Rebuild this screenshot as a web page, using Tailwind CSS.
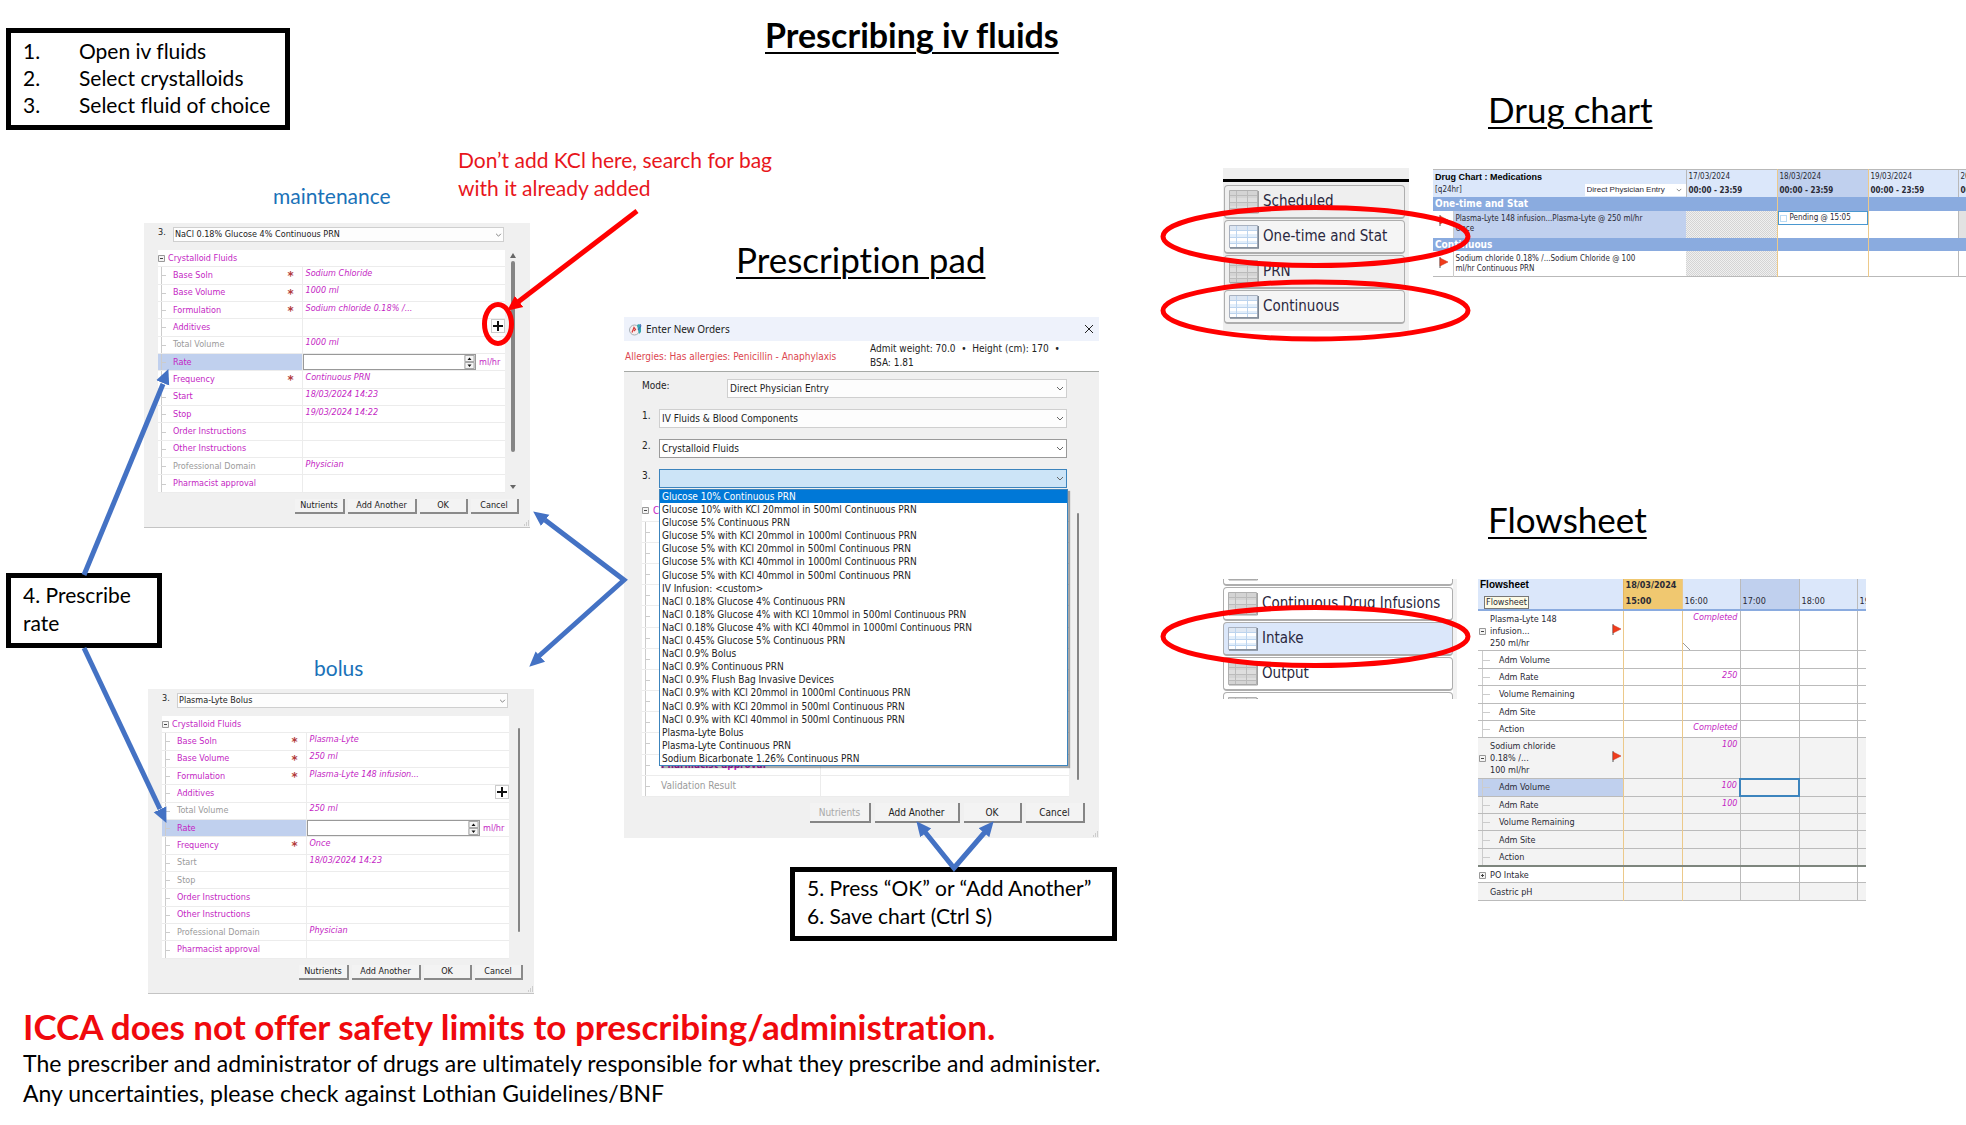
<!DOCTYPE html>
<html lang="en">
<head>
<meta charset="utf-8">
<meta name="viewport" content="width=device-width, initial-scale=1">
<title>Prescribing iv fluids</title>
<script src="https://cdn.jsdelivr.net/npm/@tailwindcss/browser@4"></script>
</head>
<body class="overflow-x-hidden bg-white font-['Lato',sans-serif] text-black [font-variant-ligatures:none]">
<svg class="hidden" aria-hidden="true">
  <defs>
    <symbol id="chev" viewBox="0 0 8 5"><path d="M1 1l3 3 3-3" fill="none" stroke="#666" stroke-width="1"/></symbol>
    <symbol id="flag" viewBox="0 0 10 11"><path d="M1 0v11" stroke="#555" stroke-width="1"/><path d="M1 1l8 4-8 4z" fill="#f03c1c" stroke="#c62a10" stroke-width=".5"/></symbol>
    <symbol id="minus" viewBox="0 0 7 7"><path d="M.5.5h6v6h-6z" fill="#f4f4f4" stroke="#999"/><path d="M2 3.5h3" stroke="#444"/></symbol>
    <symbol id="plusbox" viewBox="0 0 7 7"><path d="M.5.5h6v6h-6z" fill="#f4f4f4" stroke="#999"/><path d="M2 3.5h3M3.5 2v3" stroke="#444"/></symbol>
    <symbol id="grip" viewBox="0 0 7 7"><path d="M5 1h1M5 3h1M3 3h1M5 5h1M3 5h1M1 5h1" stroke="#aaa"/></symbol>
    <symbol id="sheet" viewBox="0 0 30 24"><path d="M.5.5h28v22H.5z" fill="#fff" stroke="#a9b1bf"/><path d="M1 1h27v4H1z" fill="#dde6f2"/><path d="M1 9h27v3H1zM1 16h27v3H1z" fill="#e3effb"/><path d="M7.500 1v21M18.500 1v21M1 5.500h27M1 12.500h27M1 18.500h27" stroke="#bcd4ee" fill="none"/><path d="M1 23h28.500V1" fill="none" stroke="#7c8794" stroke-width="1.500"/></symbol>
    <symbol id="sheetgrey" viewBox="0 0 30 24"><path d="M.5.5h28v22H.5z" fill="#d4d4d4" stroke="#b0b0b0"/><path d="M1 8h27v4H1zM1 16h27v3H1z" fill="#dedede"/><path d="M7.500 1v21M18.500 1v21M1 5.500h27M1 12.500h27M1 18.500h27" stroke="#bbb" fill="none"/><path d="M1 23h28.500V1" fill="none" stroke="#a2a2a2"/></symbol>
  </defs>
</svg>

<main class="relative grid grid-cols-[624px_538px_1fr]">
  <!-- Steps 1 to 4 -->
  <section class="flex flex-col items-start">
    <ol class="mt-7 ml-1.5 w-[284px] border-[5px] border-black px-3 pt-1 pb-[7px] text-[21px] leading-[27px]">
      <li class="flex"><span class="w-14">1.</span>Open iv fluids</li>
      <li class="flex"><span class="w-14">2.</span>Select crystalloids</li>
      <li class="flex"><span class="w-14">3.</span>Select fluid of choice</li>
    </ol>
    <h3 class="mt-[52px] ml-[273px] text-[21px] leading-7 text-[#1a72b8]">maintenance</h3>
    <div data-panel="0" class="mt-[13px] ml-36"></div>
    <p class="mt-[45px] ml-1.5 w-[156px] border-[5px] border-black px-3 pt-[3px] pb-1.5 text-[21px] leading-7">4. Prescribe rate</p>
    <h3 class="mt-1.5 ml-[314px] text-[21px] leading-7 text-[#1a72b8]">bolus</h3>
    <div data-panel="1" class="mt-[7px] ml-[148px]"></div>
  </section>

  <!-- Prescription pad -->
  <section class="flex flex-col items-start">
    <h1 class="mt-[13px] ml-[141px] text-[34px] leading-[44px] font-bold whitespace-nowrap underline decoration-2 underline-offset-4">Prescribing iv fluids</h1>
    <h2 class="mt-[180px] ml-28 text-[35px] leading-[44px] whitespace-nowrap underline decoration-2 underline-offset-4">Prescription pad</h2>
    <div role="dialog" aria-label="Enter New Orders" class="mt-9 w-[475px] bg-[#f0f0f0] font-['DejaVu_Sans_Condensed','DejaVu_Sans',sans-serif] text-[10px] leading-[13px] text-[#222]">
      <div class="flex h-6 items-center bg-[#eef2fb] px-[5px] font-['Noto_Sans',sans-serif]">
        <svg class="mr-1 size-[13px]" viewBox="0 0 13 13"><circle cx="5.500" cy="7" r="5" fill="#f8eeee" stroke="#a5afb6"/><path d="M3 9.500L5 4.500l1.500 2L5 8" fill="none" stroke="#d43c3c" stroke-width="1.200"/><path d="M8 2l2-1 2 2v6l-2 2-1-4z" fill="#35a6b0"/><path d="M11 1l1 2-3 4" stroke="#3c62b8" fill="none"/></svg>
        <span class="flex-1">Enter New Orders</span>
        <button aria-label="Close"><svg class="size-[10px]" viewBox="0 0 10 10"><path d="M1 1l8 8M9 1l-8 8" stroke="#222" stroke-width="1"/></svg></button>
      </div>
      <div class="flex h-[31px] items-center border-b border-[#a6a9a6] bg-white pl-px">
        <p class="w-[245px] whitespace-nowrap text-[#dc4650]">Allergies: Has allergies: Penicillin - Anaphylaxis</p>
        <p class="leading-[14px] whitespace-nowrap">Admit weight: 70.0 &nbsp;•&nbsp; Height (cm): 170 &nbsp;•<br>BSA: 1.81</p>
      </div>
      <div class="flex flex-col gap-[11px] pt-[7px] pr-8 pl-[18px]">
        <div class="flex items-start"><label for="mode" class="w-[85px]">Mode:</label>
          <span class="relative flex-1"><select id="mode" class="block h-[19px] w-full appearance-none border border-[#cfcfcf] bg-[#fdfdfd] pl-0.5"><option>Direct Physician Entry</option></select><svg class="pointer-events-none absolute top-[7px] right-[3px] h-[5px] w-2"><use href="#chev"/></svg></span></div>
        <div class="flex items-start"><label for="s1" class="w-[17px]">1.</label>
          <span class="relative flex-1"><select id="s1" class="block h-[19px] w-full appearance-none border border-[#cfcfcf] bg-[#fdfdfd] pl-0.5"><option>IV Fluids &amp; Blood Components</option></select><svg class="pointer-events-none absolute top-[7px] right-[3px] h-[5px] w-2"><use href="#chev"/></svg></span></div>
        <div class="flex items-start"><label for="s2" class="w-[17px]">2.</label>
          <span class="relative flex-1"><select id="s2" class="block h-[19px] w-full appearance-none border border-[#9a9a9a] bg-white pl-0.5"><option>Crystalloid Fluids</option></select><svg class="pointer-events-none absolute top-[7px] right-[3px] h-[5px] w-2"><use href="#chev"/></svg></span></div>
        <div class="flex items-start"><label for="s3" class="w-[17px]">3.</label>
          <div class="relative flex-1"><select id="s3" class="block h-[19px] w-full appearance-none border border-[#3c84bd] bg-[#cce4f7] pl-0.5"><option></option></select><svg class="pointer-events-none absolute top-[7px] right-[3px] h-[5px] w-2"><use href="#chev"/></svg>
            <ul id="fluids" role="listbox" aria-label="Fluids" class="absolute top-5 left-0 z-10 grid h-[277px] w-[409px] auto-rows-fr border border-[#3c84bd] bg-white whitespace-nowrap shadow-[2px_2px_1px_#0005]"></ul>
          </div></div>
      </div>
      <div class="mt-3 flex pl-[18px]">
        <table id="padtable" class="h-[297px] w-[427px] table-fixed bg-white"></table>
        <div class="mt-[13px] ml-2 h-[267px] w-0.5 rounded bg-[#858585]"></div>
      </div>
      <div class="flex justify-end gap-1 pt-1.5 pr-[14px]">
        <button disabled class="h-5 w-[61px] border-r-2 border-b-2 border-[#858585] bg-[#f3f3f3] text-[#a8a8a8]">Nutrients</button>
        <button class="h-5 w-[85px] border-r-2 border-b-2 border-[#858585] bg-[#f3f3f3]">Add Another</button>
        <button class="h-5 w-[58px] border-r-2 border-b-2 border-[#858585] bg-[#f3f3f3]">OK</button>
        <button class="h-5 w-[59px] border-r-2 border-b-2 border-[#858585] bg-[#f3f3f3]">Cancel</button>
      </div>
      <svg class="mt-2 ml-auto size-[7px]"><use href="#grip"/></svg>
    </div>
    <div class="mt-[29px] ml-[166px] w-[327px] border-[5px] border-black px-3 pt-0.5 pb-1.5 text-[21px] leading-7"><p>5. Press “OK” or “Add Another”</p><p>6. Save chart (Ctrl S)</p></div>
  </section>

  <!-- Charts -->
  <section class="flex min-w-0 flex-col">
    <h2 class="mt-[87px] ml-[326px] text-[35px] leading-[44px] underline decoration-2 underline-offset-4">Drug chart</h2>
    <div class="mt-[37px] ml-[61px] flex items-start gap-6 font-['DejaVu_Sans_Condensed','DejaVu_Sans',sans-serif]">
      <nav class="flex h-[163px] w-[186px] shrink-0 flex-col gap-px bg-[#efefef] text-[15px] text-[#2a2840]">
        <div class="mb-0.5 h-[14px] border-b-[3px] border-black"></div>
        <button class="mx-px mr-1 flex h-[34px] items-center gap-1 rounded-[4px] border border-b-2 border-[#aeaeae] bg-[#efefef] pl-1"><svg class="h-6 w-[30px]"><use href="#sheetgrey"/></svg>Scheduled</button>
        <button class="mx-px mr-1 flex h-[34px] items-center gap-1 rounded-[4px] border border-b-2 border-[#aeaeae] bg-[#f5f5f5] pl-1"><svg class="h-6 w-[30px]"><use href="#sheet"/></svg>One-time and Stat</button>
        <button class="mx-px mr-1 flex h-[34px] items-center gap-1 rounded-[4px] border border-b-2 border-[#aeaeae] bg-[#efefef] pl-1"><svg class="h-6 w-[30px]"><use href="#sheetgrey"/></svg>PRN</button>
        <button class="mx-px mr-1 flex h-[34px] items-center gap-1 rounded-[4px] border border-b-2 border-[#aeaeae] bg-[#f5f5f5] pl-1"><svg class="h-6 w-[30px]"><use href="#sheet"/></svg>Continuous</button>
      </nav>
      <div class="mt-px min-w-0 flex-1 overflow-hidden">
        <table class="w-[616px] table-fixed border-y border-[#b9b9b9] text-left text-[8px] leading-[10px] text-[#2a2a35]">
          <colgroup><col class="w-5"><col class="w-[233px]"><col class="w-[91px]"><col class="w-[91px]"><col class="w-[90px]"><col class="w-[91px]"></colgroup>
          <thead><tr class="h-[27px] bg-[#dbe7fa] align-top">
            <th colspan="2" class="pl-0.5 font-normal"><div class="pt-0.5 font-['Liberation_Sans',sans-serif] text-[9px] font-bold text-black">Drug Chart : Medications</div>
              <div class="flex h-[15px] items-center justify-between"><span>[q24hr]</span><span class="relative"><select aria-label="Order mode" class="block h-[12px] w-[101px] appearance-none bg-white pl-0.5 font-['Liberation_Sans',sans-serif]"><option>Direct Physician Entry</option></select><svg class="pointer-events-none absolute top-1 right-1 h-1 w-1.5"><use href="#chev"/></svg></span></div></th>
            <th class="border-l border-[#b9b9b9] pt-0.5 pl-0.5 font-normal">17/03/2024<div class="pt-1 font-bold">00:00 - 23:59</div></th>
            <th class="border-x border-[#ecc98a] bg-[#c0d0ee] pt-0.5 pl-0.5 font-normal">18/03/2024<div class="pt-1 font-bold">00:00 - 23:59</div></th>
            <th class="pt-0.5 pl-0.5 font-normal">19/03/2024<div class="pt-1 font-bold">00:00 - 23:59</div></th>
            <th class="border-l border-[#b9b9b9] pt-0.5 pl-0.5 font-normal">20/03/2024<div class="pt-1 font-bold">00:00 - 23:59</div></th>
          </tr></thead>
          <tbody>
            <tr class="h-[14px] bg-[#8aabdf]"><th colspan="3" class="pl-0.5 text-[10px] font-bold text-white">One-time and Stat</th><td class="border-x border-[#ecc98a]"></td><td></td><td></td></tr>
            <tr class="h-[27px] align-top"><td class="border-r border-[#ccc] pt-1 pl-1.5"><svg class="h-[11px] w-2.5"><use href="#flag"/></svg></td><td class="bg-[#c0d0ee] pt-[3px] pl-0.5">Plasma-Lyte 148 infusion...Plasma-Lyte @ 250 ml/hr<br>Once</td>
              <td class="bg-[conic-gradient(#d4d4d4_25%,#f0f0f0_0_50%,#d4d4d4_0_75%,#f0f0f0_0)] bg-[length:2px_2px]"></td><td class="border-x border-[#ecc98a]"><label class="flex h-[14px] items-center gap-[3px] border border-[#4a98d0] px-px"><input type="checkbox" class="size-[7px] appearance-none border border-[#bcdcf4]">Pending @ 15:05</label></td><td></td><td class="border-l border-[#b9b9b9] bg-[conic-gradient(#d4d4d4_25%,#f0f0f0_0_50%,#d4d4d4_0_75%,#f0f0f0_0)] bg-[length:2px_2px]"></td></tr>
            <tr class="h-[13px] bg-[#8aabdf]"><th colspan="3" class="pl-0.5 text-[10px] font-bold text-white">Continuous</th><td class="border-x border-[#ecc98a]"></td><td></td><td></td></tr>
            <tr class="h-[25px] align-top"><td class="border-r border-[#ccc] pt-1.5 pl-1.5"><svg class="h-[11px] w-2.5"><use href="#flag"/></svg></td><td class="pt-[3px] pl-0.5">Sodium chloride 0.18% /...Sodium Chloride @ 100<br>ml/hr Continuous PRN</td>
              <td class="bg-[conic-gradient(#d4d4d4_25%,#f0f0f0_0_50%,#d4d4d4_0_75%,#f0f0f0_0)] bg-[length:2px_2px]"></td><td class="border-x border-[#ecc98a]"></td><td></td><td class="border-l border-[#b9b9b9]"></td></tr>
          </tbody>
        </table>
      </div>
    </div>
    <h2 class="mt-[166px] ml-[326px] text-[35px] leading-[44px] underline decoration-2 underline-offset-4">Flowsheet</h2>
    <div class="mt-[38px] ml-[61px] flex items-start gap-[21px] font-['DejaVu_Sans_Condensed','DejaVu_Sans',sans-serif]">
      <nav class="flex h-[120px] w-[234px] shrink-0 flex-col justify-center gap-px overflow-hidden border-r-4 border-[#f2f2f2] text-[15px] text-[#2a2840]">
        <button aria-label="Scheduled" class="flex h-[34px] shrink-0 items-center gap-1 rounded-[4px] border border-b-2 border-[#aeaeae] bg-white pl-1"><svg class="h-6 w-[30px]"><use href="#sheetgrey"/></svg></button>
        <button class="flex h-[34px] shrink-0 items-center gap-1 rounded-[4px] border border-b-2 border-[#aeaeae] bg-white pl-1 whitespace-nowrap"><svg class="h-6 w-[30px]"><use href="#sheetgrey"/></svg>Continuous Drug Infusions</button>
        <button class="flex h-[34px] shrink-0 items-center gap-1 rounded-[4px] border border-b-2 border-[#aeaeae] bg-[#dbe7fa] pl-1"><svg class="h-6 w-[30px]"><use href="#sheet"/></svg>Intake</button>
        <button class="flex h-[34px] shrink-0 items-center gap-1 rounded-[4px] border border-b-2 border-[#aeaeae] bg-white pl-1"><svg class="h-6 w-[30px]"><use href="#sheetgrey"/></svg>Output</button>
        <button aria-label="Balance" class="flex h-[34px] shrink-0 items-center gap-1 rounded-[4px] border border-b-2 border-[#aeaeae] bg-white pl-1"><svg class="h-6 w-[30px]"><use href="#sheetgrey"/></svg></button>
      </nav>
      <div class="w-[388px] overflow-hidden"><table id="flow" class="h-[322px] w-[438px] table-fixed text-left text-[9px] leading-3 text-[#2a2a35]"></table></div>
    </div>
  </section>

  <!-- Callouts and arrows drawn over the windows -->
  <p class="absolute top-[146px] left-[458px] text-[21px] leading-7 text-[#e8161c]">Don’t add KCl here, search for bag<br>with it already added</p>
  <svg class="pointer-events-none absolute inset-0 z-20 size-full overflow-visible" aria-hidden="true">
    <defs>
      <marker id="hb" markerUnits="userSpaceOnUse" markerWidth="16" markerHeight="16" refX="14" refY="8" orient="auto"><path d="M0 1l15 7-15 7z" fill="#4472c4"/></marker>
      <marker id="hr" markerUnits="userSpaceOnUse" markerWidth="16" markerHeight="16" refX="14" refY="8" orient="auto"><path d="M0 1l15 7-15 7z" fill="#f00"/></marker>
    </defs>
    <g fill="none" stroke="#4472c4" stroke-width="5">
      <path d="M84 575L163 384"/><path d="M84 648L160 809"/><path d="M545 520L624 580L539 656"/><path d="M925 832L954 868L985 832"/>
    </g>
    <g fill="none" stroke="none">
      <path d="M84 575L168 370" marker-end="url(#hb)"/><path d="M84 648L166 822" marker-end="url(#hb)"/>
      <path d="M624 580L534 512" marker-end="url(#hb)"/><path d="M624 580L530 666" marker-end="url(#hb)"/>
      <path d="M954 868L917 822" marker-end="url(#hb)"/><path d="M954 868L993 822" marker-end="url(#hb)"/>
      <path d="M637 211L508 310" marker-end="url(#hr)"/>
    </g>
    <g fill="none" stroke="#f00" stroke-width="5">
      <path d="M637 211L518 302"/>
      <ellipse cx="498" cy="324" rx="13.500" ry="19.500"/>
      <ellipse cx="1315.500" cy="236.500" rx="152.500" ry="29"/>
      <ellipse cx="1315.500" cy="310.500" rx="152.500" ry="28.500"/>
      <ellipse cx="1315.500" cy="636.500" rx="152.500" ry="29"/>
    </g>
  </svg>
</main>

<footer class="mt-2.5 pl-[23px] text-[23px] leading-[30px]">
  <p class="text-[35px] leading-[44px] font-bold text-[#f0090d]">ICCA does not offer safety limits to prescribing/administration.</p>
  <p>The prescriber and administrator of drugs are ultimately responsible for what they prescribe and administer.</p>
  <p>Any uncertainties, please check against Lothian Guidelines/BNF</p>
</footer>

<script>
const fluids = ['Glucose 10% Continuous PRN','Glucose 10% with KCl 20mmol in 500ml Continuous PRN','Glucose 5% Continuous PRN','Glucose 5% with KCl 20mmol in 1000ml Continuous PRN','Glucose 5% with KCl 20mmol in 500ml Continuous PRN','Glucose 5% with KCl 40mmol in 1000ml Continuous PRN','Glucose 5% with KCl 40mmol in 500ml Continuous PRN','IV Infusion: &lt;custom&gt;','NaCl 0.18% Glucose 4% Continuous PRN','NaCl 0.18% Glucose 4% with KCl 10mmol in 500ml Continuous PRN','NaCl 0.18% Glucose 4% with KCl 40mmol in 1000ml Continuous PRN','NaCl 0.45% Glucose 5% Continuous PRN','NaCl 0.9% Bolus','NaCl 0.9% Continuous PRN','NaCl 0.9% Flush Bag Invasive Devices','NaCl 0.9% with KCl 20mmol in 1000ml Continuous PRN','NaCl 0.9% with KCl 20mmol in 500ml Continuous PRN','NaCl 0.9% with KCl 40mmol in 500ml Continuous PRN','Plasma-Lyte Bolus','Plasma-Lyte Continuous PRN','Sodium Bicarbonate 1.26% Continuous PRN'];
document.getElementById('fluids').innerHTML = fluids.map((f, i) => `<li role="option" class="pl-0.5 ${i ? '' : 'bg-[#0078d7] text-white'}">${f}</li>`).join('');

const names = ['Base Soln','Base Volume','Formulation','Additives','Total Volume','Rate','Frequency','Start','Stop','Order Instructions','Other Instructions','Professional Domain','Pharmacist approval'];
const required = ['Base Soln','Base Volume','Formulation','Frequency'];
const panels = [
  {title:'NaCl 0.18% Glucose 4% Continuous PRN', grey:['Total Volume','Professional Domain'], arrows:true,
   values:['Sodium Chloride','1000 ml','Sodium chloride 0.18% /...','','1000 ml','','Continuous PRN','18/03/2024 14:23','19/03/2024 14:22','','','Physician','']},
  {title:'Plasma-Lyte Bolus', grey:['Total Volume','Start','Stop','Professional Domain'], arrows:false,
   values:['Plasma-Lyte','250 ml','Plasma-Lyte 148 infusion...','','250 ml','','Once','18/03/2024 14:23','','','','Physician','']}
];
const head = `<tr class="border-b border-[#ececec]"><th colspan="2" class="p-0 text-left font-normal"><div class="flex items-center gap-[3px]"><svg class="size-[7px]"><use href="#minus"/></svg>Crystalloid Fluids</div></th></tr>`;
const tree = `<span class="absolute inset-y-0 left-[3px] border-l border-[#ccc]"></span><span class="absolute top-1/2 left-[3px] w-[5px] border-t border-[#ccc]"></span>`;
document.querySelectorAll('[data-panel]').forEach(el => {
  const k = +el.dataset.panel, p = panels[k];
  const rows = names.map((n, i) => {
    let value = `<span class="-mt-1 block italic">${p.values[i]}</span>`;
    if (n === 'Additives') value = `<button aria-label="Add additive" class="absolute top-0 right-0 flex size-[14px] items-center justify-center border border-[#ccc] bg-white"><svg class="size-[10px]" viewBox="0 0 10 10"><path d="M5 0v10M0 5h10" stroke="#111" stroke-width="2"/></svg></button>`;
    if (n === 'Rate') value = `<div class="absolute inset-0 flex items-center gap-[3px]"><div class="flex h-full flex-1 border border-[#999] bg-white"><input id="rate${k}" type="text" class="w-0 flex-1 outline-none"><svg class="h-[14px] w-[11px] bg-[#ddd]" viewBox="0 0 11 14"><path d="M1 .5h9v6H1zM1 7.500h9v6H1z" fill="#f5f5f5" stroke="#aaa"/><path d="M3.500 5l2-2.500 2 2.500zM3.500 9.500l2 2.500 2-2.500z" fill="#111"/></svg></div><span class="w-[26px]">ml/hr</span></div>`;
    return `<tr class="border-b border-[#ececec]"><th class="relative p-0 pl-[15px] text-left font-normal ${n === 'Rate' ? 'bg-[#c0d0ee]' : ''} ${p.grey.includes(n) ? 'text-[#9b9b9b]' : ''}">${tree}${n === 'Rate' ? `<label for="rate${k}">Rate</label>` : n}${required.includes(n) ? '<span class="absolute top-[3px] right-2 text-[13px] font-bold text-[#b23a3a]">*</span>' : ''}</th><td class="relative border-l border-[#ececec] p-0 pl-[3px]">${value}</td></tr>`;
  }).join('');
  el.innerHTML = `<div class="flex h-[305px] w-[386px] flex-col border-b border-[#c4c4c4] bg-[#f0f0f0] font-['DejaVu_Sans_Condensed','DejaVu_Sans',sans-serif] text-[9px] leading-[11px] text-[#222]">
    <div class="flex items-start pt-1 pl-3.5"><label for="order${k}" class="w-[15px]">3.</label><span class="relative"><select id="order${k}" class="block h-[15px] w-[331px] appearance-none border border-[#cfcfcf] bg-[#fdfdfd] pl-px"><option>${p.title}</option></select><svg class="pointer-events-none absolute top-[6px] right-0.5 h-1 w-[7px]"><use href="#chev"/></svg></span></div>
    <div class="mt-2 flex pl-3.5"><table class="h-[243px] w-[347px] table-fixed border-collapse bg-white text-[#c41fc4]"><colgroup><col class="w-36"><col></colgroup>${head}${rows}</table>
      ${p.arrows ? '<div class="ml-[5px] flex w-1.5 flex-col items-center pt-[3px]"><svg class="h-1.5 w-1.5" viewBox="0 0 6 6"><path d="M0 5l3-5 3 5z" fill="#666"/></svg><div class="mt-0.5 h-[191px] w-1 rounded bg-[#858585]"></div><svg class="mt-auto mb-1 h-1 w-1.5" viewBox="0 0 6 4"><path d="M0 0l3 4 3-4z" fill="#666"/></svg></div>' : '<div class="mt-3 ml-[9px] h-[204px] w-0.5 rounded bg-[#858585]"></div>'}
    </div>
    <div class="flex justify-end gap-[3px] pt-1.5 pr-[11px]">
      <button class="h-[15px] w-[50px] border-r-2 border-b-2 border-[#8a8a8a] bg-[#f3f3f3]">Nutrients</button>
      <button class="h-[15px] w-[69px] border-r-2 border-b-2 border-[#8a8a8a] bg-[#f3f3f3]">Add Another</button>
      <button class="h-[15px] w-12 border-r-2 border-b-2 border-[#8a8a8a] bg-[#f3f3f3]">OK</button>
      <button class="h-[15px] w-12 border-r-2 border-b-2 border-[#8a8a8a] bg-[#f3f3f3]">Cancel</button>
    </div>
    <svg class="mt-auto ml-auto size-[7px]"><use href="#grip"/></svg>
  </div>`;
});

// Rows 1 to 11 lie wholly under the open list, so only their tree lines are drawn.
const padRows = ['Crystalloid Fluids', ...Array(11).fill(''), 'Pharmacist approval', 'Validation Result'];
document.getElementById('padtable').innerHTML = `<colgroup><col class="w-[178px]"><col></colgroup>` +
  padRows.map((n, i) =>
  `<tr class="h-[21px] border-b border-[#ececec]"><th class="relative p-0 text-left ${i ? 'border-r border-[#ececec] pl-[19px]' : ''} ${n === 'Pharmacist approval' ? 'font-bold' : 'font-normal'} ${n === 'Validation Result' ? 'text-[#9b9b9b]' : 'text-[#c41fc4]'}">${i ? tree : ''}${i ? n : `<div class="flex items-center gap-1"><svg class="size-[7px]"><use href="#minus"/></svg>${n}</div>`}</th><td></td></tr>`).join('');

const kids = ['Adm Volume','Adm Rate','Volume Remaining','Adm Site','Action'];
const flow = [
  {n:['Plasma-Lyte 148','infusion...','250 ml/hr'], v:'Completed', box:true},
  ...kids.map(n => ({n:[n], kid:true, v:{'Adm Rate':'250','Action':'Completed'}[n]})),
  {n:['Sodium chloride','0.18% /...','100 ml/hr'], v:'100', g:true, box:true},
  ...kids.map(n => ({n:[n], kid:true, g:true, sel:n === 'Adm Volume', last:n === 'Action', v:{'Adm Volume':'100','Adm Rate':'100'}[n]})),
  {n:['PO Intake'], plus:true}, {n:['Gastric pH'], g:true}
];
const cell = 'border-l border-[#bbb] p-0';
document.getElementById('flow').innerHTML = `<colgroup><col class="w-[145px]"><col class="w-[59px]"><col class="w-[58px]"><col class="w-[59px]"><col class="w-[58px]"><col class="w-[59px]"></colgroup>
<thead><tr class="h-[31px] border-b-2 border-[#8aabdf] bg-[#dbe7fa] align-top"><th class="p-0 pl-0.5 font-normal"><div class="font-['Liberation_Sans',sans-serif] text-[10px] font-bold text-black">Flowsheet</div><span class="mt-[5px] ml-1 inline-block border border-[#777] bg-[#fdfbe6] px-px leading-[11px]">Flowsheet</span></th>
<th class="border-l border-[#e6b65e] bg-[#f0c870] p-0 pl-0.5">18/03/2024<div class="pt-1">15:00</div></th><th class="border-l border-[#ecc98a] p-0 pt-4 pl-0.5 font-normal">16:00</th><th class="border-l border-[#bbb] bg-[#c0d0ee] p-0 pt-4 pl-0.5 font-normal">17:00</th><th class="border-l border-[#bbb] p-0 pt-4 pl-0.5 font-normal">18:00</th><th class="border-l border-[#bbb] p-0 pt-4 pl-0.5 font-normal">19:00</th></tr></thead><tbody>` +
flow.map((r, i) => `<tr class="${r.n.length > 1 ? 'h-10' : 'h-[17px]'} ${r.last ? 'border-b-2 border-[#7d857d]' : 'border-b border-[#bbb]'} ${r.g ? 'bg-[#f3f3f3]' : ''}"><th class="relative p-0 font-normal ${r.kid ? 'pl-[21px]' : 'pl-3'} ${r.sel ? 'bg-[#c0d0ee]' : ''}">${r.kid ? '<span class="absolute inset-y-0 left-1 border-l border-[#ccc]"></span><span class="absolute top-1/2 left-1 w-2 border-t border-[#ccc]"></span>' : ''}${r.box ? '<svg class="absolute top-[17px] left-px size-[7px]"><use href="#minus"/></svg><svg class="absolute top-[13px] right-px h-[11px] w-2.5"><use href="#flag"/></svg>' : ''}${r.plus ? '<svg class="absolute top-[5px] left-px size-[7px]"><use href="#plusbox"/></svg>' : ''}${r.n.join('<br>')}</th><td class="border-l border-[#ecc98a] p-0"></td><td class="relative border-l border-[#ecc98a] p-0 pr-0.5 text-right align-top text-[#c41fc4] italic">${i ? '' : '<svg class="absolute bottom-0 left-0 size-[7px]"><path d="M0 0l7 7" stroke="#999"/></svg>'}${r.v || ''}</td><td class="${r.sel ? 'border-2 border-[#3c84bd]' : cell}"></td><td class="${cell}"></td><td class="${cell}"></td></tr>`).join('') + '</tbody>';
</script>
</body>
</html>
